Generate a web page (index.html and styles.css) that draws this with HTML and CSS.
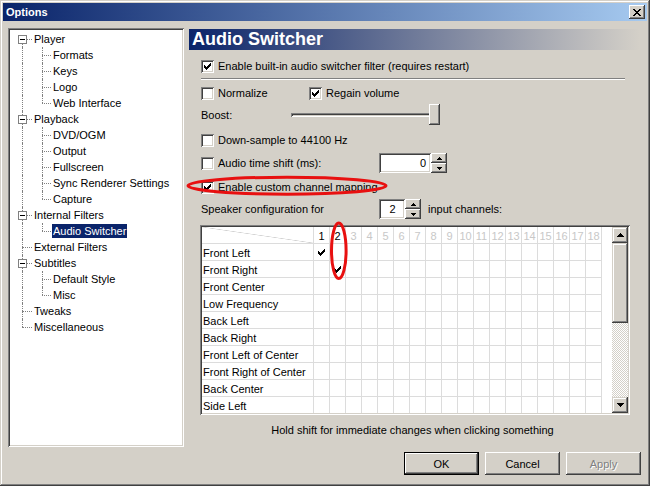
FILE: index.html
```html
<!DOCTYPE html>
<html>
<head>
<meta charset="utf-8">
<title>Options</title>
<link rel="stylesheet" href="styles.css">
</head>
<body>
<div class="window">
  <div class="titlebar">
    <span class="title">Options</span>
    <span class="close"><svg width="8" height="7" viewBox="0 0 8 7"><path d="M0 0h2v1H0zM6 0h2v1H6zM1 1h2v1H1zM5 1h2v1H5zM2 2h4v1H2zM3 3h2v1H3zM2 4h4v1H2zM1 5h2v1H1zM5 5h2v1H5zM0 6h2v1H0zM6 6h2v1H6z"/></svg></span>
  </div>
  <div class="main">
    <div class="tree">
      <div class="node"><span class="ind root first"><span class="box"></span></span><span class="lbl">Player</span></div>
      <div class="node"><span class="ind"></span><span class="ind2"></span><span class="lbl">Formats</span></div>
      <div class="node"><span class="ind"></span><span class="ind2"></span><span class="lbl">Keys</span></div>
      <div class="node"><span class="ind"></span><span class="ind2"></span><span class="lbl">Logo</span></div>
      <div class="node"><span class="ind"></span><span class="ind2 last"></span><span class="lbl">Web Interface</span></div>
      <div class="node"><span class="ind root"><span class="box"></span></span><span class="lbl">Playback</span></div>
      <div class="node"><span class="ind"></span><span class="ind2"></span><span class="lbl">DVD/OGM</span></div>
      <div class="node"><span class="ind"></span><span class="ind2"></span><span class="lbl">Output</span></div>
      <div class="node"><span class="ind"></span><span class="ind2"></span><span class="lbl">Fullscreen</span></div>
      <div class="node"><span class="ind"></span><span class="ind2"></span><span class="lbl">Sync Renderer Settings</span></div>
      <div class="node"><span class="ind"></span><span class="ind2 last"></span><span class="lbl">Capture</span></div>
      <div class="node"><span class="ind root"><span class="box"></span></span><span class="lbl">Internal Filters</span></div>
      <div class="node"><span class="ind"></span><span class="ind2 last"></span><span class="lbl sel">Audio Switcher</span></div>
      <div class="node"><span class="ind root"></span><span class="lbl">External Filters</span></div>
      <div class="node"><span class="ind root"><span class="box"></span></span><span class="lbl">Subtitles</span></div>
      <div class="node"><span class="ind"></span><span class="ind2"></span><span class="lbl">Default Style</span></div>
      <div class="node"><span class="ind"></span><span class="ind2 last"></span><span class="lbl">Misc</span></div>
      <div class="node"><span class="ind root"></span><span class="lbl">Tweaks</span></div>
      <div class="node"><span class="ind root last"></span><span class="lbl">Miscellaneous</span></div>
    </div>
    <div class="panel">
      <div class="header">Audio Switcher</div>
      <div class="opts">
        <div class="row r1"><span class="cb"><svg width="7" height="7" viewBox="0 0 7 7"><path d="M0 2h1v3H0zM1 3h1v3H1zM2 4h1v3H2zM3 3h1v3H3zM4 2h1v3H4zM5 1h1v3H5zM6 0h1v3H6z"/></svg></span><span>Enable built-in audio switcher filter (requires restart)</span></div>
        <div class="sep"></div>
        <div class="row r2">
          <div class="item w108"><span class="cb"></span><span>Normalize</span></div>
          <div class="item"><span class="cb"><svg width="7" height="7" viewBox="0 0 7 7"><path d="M0 2h1v3H0zM1 3h1v3H1zM2 4h1v3H2zM3 3h1v3H3zM4 2h1v3H4zM5 1h1v3H5zM6 0h1v3H6z"/></svg></span><span>Regain volume</span></div>
        </div>
        <div class="row r3">
          <span class="w90">Boost:</span>
          <div class="slider"><div class="track"></div><div class="thumb"></div></div>
        </div>
        <div class="row r4"><span class="cb"></span><span>Down-sample to 44100 Hz</span></div>
        <div class="row r5">
          <div class="item w178"><span class="cb"></span><span>Audio time shift (ms):</span></div>
          <div class="edit">0</div>
          <div class="spin"><span><svg width="5" height="3" viewBox="0 0 5 3"><path d="M2 0h1v1H2zM1 1h3v1H1zM0 2h5v1H0z"/></svg></span><span><svg width="5" height="3" viewBox="0 0 5 3"><path d="M0 0h5v1H0zM1 1h3v1H1zM2 2h1v1H2z"/></svg></span></div>
        </div>
        <div class="row r6"><span class="cb"><svg width="7" height="7" viewBox="0 0 7 7"><path d="M0 2h1v3H0zM1 3h1v3H1zM2 4h1v3H2zM3 3h1v3H3zM4 2h1v3H4zM5 1h1v3H5zM6 0h1v3H6z"/></svg></span><span>Enable custom channel mapping</span></div>
        <div class="row r7">
          <span class="w178">Speaker configuration for</span>
          <div class="edit small">2</div>
          <div class="spin"><span><svg width="5" height="3" viewBox="0 0 5 3"><path d="M2 0h1v1H2zM1 1h3v1H1zM0 2h5v1H0z"/></svg></span><span><svg width="5" height="3" viewBox="0 0 5 3"><path d="M0 0h5v1H0zM1 1h3v1H1zM2 2h1v1H2z"/></svg></span></div>
          <span class="after">input channels:</span>
        </div>
      </div>
      <div class="grid">
        <div class="gbody">
          <div class="grow ghead"><span class="corner"></span><span>1</span><span>2</span><span class="dim">3</span><span class="dim">4</span><span class="dim">5</span><span class="dim">6</span><span class="dim">7</span><span class="dim">8</span><span class="dim">9</span><span class="dim">10</span><span class="dim">11</span><span class="dim">12</span><span class="dim">13</span><span class="dim">14</span><span class="dim">15</span><span class="dim">16</span><span class="dim">17</span><span class="dim">18</span></div>
          <div class="grow"><span class="glab">Front Left</span><span class="gchk c1"><svg width="7" height="7" viewBox="0 0 7 7"><path d="M0 2h1v3H0zM1 3h1v3H1zM2 4h1v3H2zM3 3h1v3H3zM4 2h1v3H4zM5 1h1v3H5zM6 0h1v3H6z"/></svg></span></div>
          <div class="grow"><span class="glab">Front Right</span><span class="gchk c2"><svg width="7" height="7" viewBox="0 0 7 7"><path d="M0 2h1v3H0zM1 3h1v3H1zM2 4h1v3H2zM3 3h1v3H3zM4 2h1v3H4zM5 1h1v3H5zM6 0h1v3H6z"/></svg></span></div>
          <div class="grow"><span class="glab">Front Center</span></div>
          <div class="grow"><span class="glab">Low Frequency</span></div>
          <div class="grow"><span class="glab">Back Left</span></div>
          <div class="grow"><span class="glab">Back Right</span></div>
          <div class="grow"><span class="glab">Front Left of Center</span></div>
          <div class="grow"><span class="glab">Front Right of Center</span></div>
          <div class="grow"><span class="glab">Back Center</span></div>
          <div class="grow"><span class="glab">Side Left</span></div>
        </div>
        <div class="vscroll">
          <div class="sbtn"><svg width="7" height="4" viewBox="0 0 7 4"><path d="M3 0h1v1H3zM2 1h3v1H2zM1 2h5v1H1zM0 3h7v1H0z"/></svg></div>
          <div class="sthumb"></div>
          <div class="strack"></div>
          <div class="sbtn"><svg width="7" height="4" viewBox="0 0 7 4"><path d="M0 0h7v1H0zM1 1h5v1H1zM2 2h3v1H2zM3 3h1v1H3z"/></svg></div>
        </div>
      </div>
      <div class="hint">Hold shift for immediate changes when clicking something</div>
    </div>
  </div>
  <div class="buttons">
    <div class="btn default">OK</div>
    <div class="btn">Cancel</div>
    <div class="btn disabled">Apply</div>
  </div>
  <svg class="ring ring1" width="205" height="26" viewBox="0 0 205 26"><ellipse cx="102" cy="12.7" rx="99" ry="8.5"/></svg>
  <svg class="ring ring2" width="22" height="64" viewBox="0 0 22 64"><ellipse cx="10.8" cy="31.8" rx="7.3" ry="27.7"/></svg>
</div>
</body>
</html>
```

FILE: styles.css
```css
html, body {
  margin: 0;
  padding: 0;
  background: #d4d0c8;
}
body {
  font-family: "Liberation Sans", Arial, sans-serif;
  font-size: 11px;
  color: #000;
}
.window {
  position: relative;
  width: 650px;
  height: 486px;
  box-sizing: border-box;
  padding: 3px;
  background: #d4d0c8;
  box-shadow: inset -1px -1px #404040, inset 1px 1px #d4d0c8, inset -2px -2px #808080, inset 2px 2px #fff;
  display: flex;
  flex-direction: column;
}
.titlebar {
  height: 18px;
  flex: none;
  background: linear-gradient(90deg, #0a246a, #a6caf0);
  display: flex;
  align-items: center;
  justify-content: space-between;
  padding: 0 2px 0 3px;
  color: #fff;
  font-weight: bold;
}
.close {
  width: 16px;
  height: 14px;
  background: #d4d0c8;
  box-shadow: inset -1px -1px #404040, inset 1px 1px #fff, inset -2px -2px #808080;
  display: flex;
  align-items: center;
  justify-content: center;
}
.main {
  display: flex;
  padding: 7px 0 0 5px;
  flex: none;
}
.tree {
  width: 176px;
  height: 419px;
  box-sizing: border-box;
  background: #fff;
  box-shadow: inset 1px 1px #808080, inset -1px -1px #fff, inset 2px 2px #404040, inset -2px -2px #d4d0c8;
  padding: 3px 0 0 5px;
}
.node {
  display: flex;
  align-items: center;
  height: 16px;
}
.ind, .ind2 {
  position: relative;
  flex: none;
  width: 19px;
  height: 16px;
}
.ind::before, .ind2::before {
  content: "";
  position: absolute;
  left: 9px;
  top: 0;
  bottom: 0;
  border-left: 1px dotted #808080;
}
.ind2::before { left: 10px; }
.ind.first::before { top: 8px; }
.ind.last::before, .ind2.last::before { bottom: 8px; }
.ind.root::after, .ind2::after {
  content: "";
  position: absolute;
  left: 9px;
  right: 0;
  top: 8px;
  border-top: 1px dotted #808080;
}
.ind2::after { left: 10px; }
.box {
  position: absolute;
  z-index: 1;
  left: 5px;
  top: 4px;
  width: 9px;
  height: 9px;
  box-sizing: border-box;
  border: 1px solid #808080;
  background: #fff;
}
.box::after {
  content: "";
  position: absolute;
  left: 1px;
  top: 3px;
  width: 5px;
  height: 1px;
  background: #000;
}
.lbl {
  margin-left: 1px;
  padding: 0 1px;
  line-height: 14px;
  white-space: nowrap;
}
.lbl.sel {
  background: #0a246a;
  color: #fff;
}
.panel {
  margin-left: 5px;
  width: 451px;
  display: flex;
  flex-direction: column;
}
.header {
  margin-top: 1px;
  height: 21px;
  line-height: 21px;
  padding-left: 3px;
  background: linear-gradient(90deg, #0a246a, #d4d0c8);
  color: #fff;
  font-weight: bold;
  font-size: 18px;
}
.opts {
  padding-left: 12px;
  display: flex;
  flex-direction: column;
}
.row {
  display: flex;
  align-items: center;
  white-space: nowrap;
}
.item {
  display: flex;
  align-items: center;
}
.cb {
  flex: none;
  width: 13px;
  height: 13px;
  box-sizing: border-box;
  background: #fff;
  box-shadow: inset 1px 1px #808080, inset -1px -1px #fff, inset 2px 2px #404040, inset -2px -2px #d4d0c8;
  margin-right: 4px;
  display: flex;
  align-items: center;
  justify-content: center;
}
.cb svg { display: block; }
.w108 { width: 108px; }
.w90 { width: 90px; flex: none; }
.w178 { width: 178px; flex: none; }
.r1 { margin-top: 9px; height: 14px; }
.sep {
  margin-top: 5px;
  width: 424px;
  height: 0;
  border-top: 1px solid #808080;
  border-bottom: 1px solid #fff;
}
.r2 { margin-top: 6px; height: 14px; }
.r3 { margin-top: 4px; height: 21px; }
.r4 { margin-top: 8px; height: 14px; }
.r5 { margin-top: 6px; height: 20px; }
.r6 { margin-top: 7px; height: 14px; }
.r7 { margin-top: 5px; height: 20px; }
.slider {
  position: relative;
  width: 149px;
  height: 21px;
}
.track {
  margin-top: 9px;
  height: 4px;
  box-shadow: inset 1px 1px #808080, inset -1px -1px #fff, inset 2px 2px #404040, inset -2px -2px #d4d0c8;
}
.thumb {
  position: absolute;
  right: 0;
  top: 0;
  width: 11px;
  height: 21px;
  background: #d4d0c8;
  box-shadow: inset -1px -1px #404040, inset 1px 1px #fff, inset -2px -2px #808080;
}
.edit {
  flex: none;
  width: 52px;
  height: 20px;
  box-sizing: border-box;
  background: #fff;
  box-shadow: inset 1px 1px #808080, inset -1px -1px #fff, inset 2px 2px #404040, inset -2px -2px #d4d0c8;
  display: flex;
  align-items: center;
  justify-content: flex-end;
  padding-right: 5px;
}
.edit.small {
  width: 26px;
  justify-content: center;
  padding: 0 0 0 1px;
}
.spin {
  flex: none;
  width: 16px;
  height: 20px;
  display: flex;
  flex-direction: column;
}
.spin span {
  flex: 1;
  background: #d4d0c8;
  box-shadow: inset -1px -1px #404040, inset 1px 1px #fff, inset -2px -2px #808080;
  display: flex;
  align-items: center;
  justify-content: center;
}
.spin svg { display: block; }
.after { margin-left: 7px; }
.grid {
  margin-top: 6px;
  margin-left: 11px;
  width: 430px;
  height: 190px;
  box-sizing: border-box;
  padding: 2px;
  background: #fff;
  box-shadow: inset 1px 1px #808080, inset -1px -1px #fff, inset 2px 2px #404040, inset -2px -2px #d4d0c8;
  display: flex;
}
.gbody {
  flex: 1;
  overflow: hidden;
  background-image:
    repeating-linear-gradient(90deg, transparent 0 15px, #dcdcdc 15px 16px),
    repeating-linear-gradient(180deg, transparent 0 16px, #dcdcdc 16px 17px);
  background-size: 304px 100%, 400px 100%;
  background-position: 96px 0, 0 0;
  background-repeat: no-repeat;
}
.grow {
  display: grid;
  grid-template-columns: 112px repeat(18, 16px);
  height: 17px;
  align-items: center;
}
.ghead span {
  text-align: center;
  padding-right: 1px;
  padding-top: 1px;
  line-height: 16px;
  align-self: start;
}
.ghead .corner {
  height: 16px;
  padding: 0;
  background: linear-gradient(to top right, transparent calc(50% - 0.6px), #d0d0d0 50%, transparent calc(50% + 0.6px));
  background-size: 111px 16px;
  background-repeat: no-repeat;
}
.ghead .dim { color: #c8c8c8; }
.glab {
  padding-left: 1px;
  padding-top: 1px;
  line-height: 16px;
  align-self: start;
  white-space: nowrap;
}
.gchk {
  height: 16px;
  align-self: start;
  display: flex;
  align-items: center;
  justify-content: center;
  padding-right: 1px;
}
.gchk svg { display: block; }
.c1 { grid-column: 2; }
.c2 { grid-column: 3; }
.vscroll {
  width: 16px;
  flex: none;
  display: flex;
  flex-direction: column;
}
.sbtn {
  height: 16px;
  flex: none;
  background: #d4d0c8;
  box-shadow: inset -1px -1px #404040, inset 1px 1px #d4d0c8, inset -2px -2px #808080, inset 2px 2px #fff;
  display: flex;
  align-items: center;
  justify-content: center;
}
.sbtn svg { display: block; }
.sthumb {
  height: 80px;
  flex: none;
  background: #d4d0c8;
  box-shadow: inset -1px -1px #404040, inset 1px 1px #d4d0c8, inset -2px -2px #808080, inset 2px 2px #fff;
}
.strack {
  flex: 1;
  background-image: conic-gradient(#d4d0c8 25%, #fff 0 50%, #d4d0c8 0 75%, #fff 0);
  background-size: 2px 2px;
}
.hint {
  margin-top: 9px;
  line-height: 12px;
  text-align: center;
  padding-right: 4px;
}
.buttons {
  display: flex;
  justify-content: flex-end;
  gap: 6px;
  margin-top: 5px;
  padding-right: 6px;
}
.btn {
  width: 75px;
  height: 23px;
  box-sizing: border-box;
  background: #d4d0c8;
  box-shadow: inset -1px -1px #404040, inset 1px 1px #fff, inset -2px -2px #808080, inset 2px 2px #d4d0c8;
  display: flex;
  align-items: center;
  justify-content: center;
}
.btn.default {
  border: 1px solid #000;
}
.btn.disabled {
  color: #808080;
  text-shadow: 1px 1px #fff;
}
.ring {
  position: absolute;
  fill: none;
  stroke: #e81010;
  stroke-width: 3;
}
.ring1 { left: 185px; top: 173px; }
.ring2 { left: 328px; top: 219px; }
```
